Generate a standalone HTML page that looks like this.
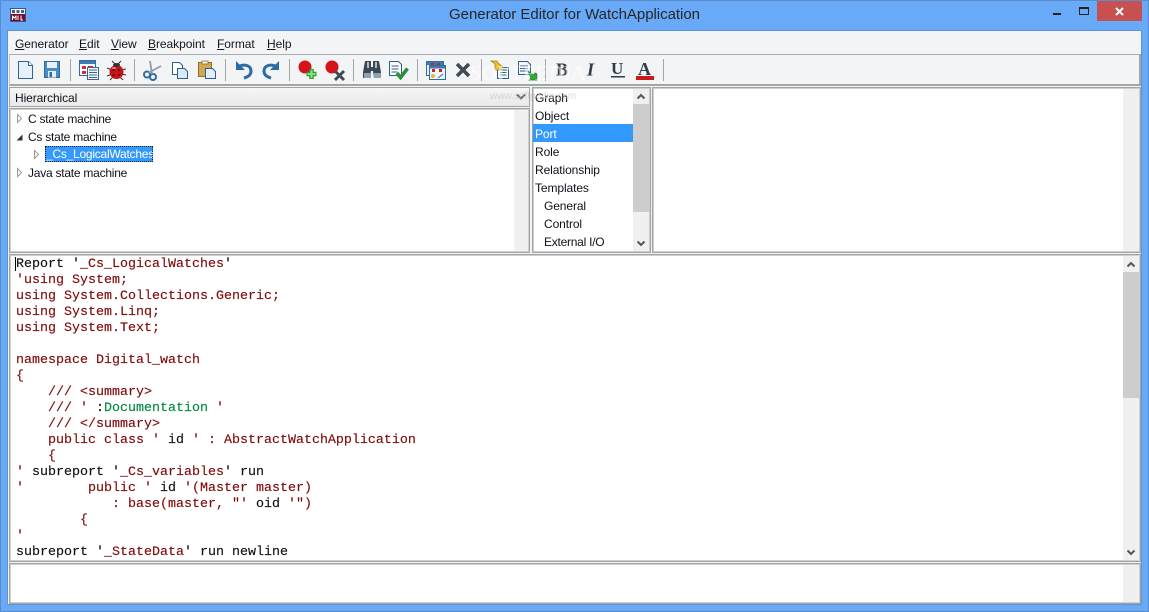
<!DOCTYPE html>
<html><head><meta charset="utf-8"><title>Generator Editor for WatchApplication</title>
<style>
html,body{margin:0;padding:0}
body{width:1149px;height:612px;overflow:hidden;background:#69aaf8;position:relative;font:12px "Liberation Sans",sans-serif;color:#10101a}
div,span,pre,svg{position:absolute;box-sizing:border-box}
u{text-decoration:underline}
.frame{left:0;top:0;width:1149px;height:612px;border:1px solid #5a8ccb}
.client{left:8px;top:31px;width:1133px;height:573px;background:#f3f4f6;outline:1px solid #5f93d2}
.panel{background:#fff;border:1px solid #a3a3a3;box-shadow:inset 0 0 0 1px #cfcfcf}
.sb{background:#f0f0f0}
.th{background:#cdcdcd}
.t{white-space:nowrap;line-height:18px;letter-spacing:-.1px}
.tr{letter-spacing:-.24px}
.m{top:35px;line-height:18px;white-space:nowrap;color:#141420;letter-spacing:-.05px}
pre{margin:0;left:16px;top:257px;font:13.33px/16px "Liberation Mono",monospace;color:#7f0a0a;-webkit-text-stroke:.15px currentColor}
b{font-weight:normal;color:#111}
i{font-style:normal;color:#008a3c}
</style></head><body>
<div class="frame"></div>
<svg style="left:10px;top:8px" width="17" height="14" viewBox="0 0 17 14"><rect x=".5" y=".5" width="15" height="13" fill="#fff" stroke="#34578a"/><rect x="2" y="2" width="3" height="3" fill="#3c5f96"/><rect x="6.500" y="2" width="3" height="3" fill="#3c5f96"/><rect x="11" y="2" width="3" height="3" fill="#3c5f96"/><rect x="1" y="6" width="14" height="7" fill="#7a0a2a"/><path d="M2.500 12V7.500M6 12V7.500M2.500 8l1.700 2L6 8M8 7.500v4.500M11 7.500v4.500h2" stroke="#fff" fill="none"/></svg>
<div class="t" style="left:449px;top:5px;font-size:15px;line-height:20px;color:#262626;letter-spacing:-.03px">Generator Editor for WatchApplication</div>
<div style="left:1053px;top:13px;width:8px;height:2px;background:#222"></div>
<div style="left:1079px;top:7px;width:10px;height:8px;border:1px solid #222;border-top-width:2px"></div>
<div style="left:1097px;top:1px;width:45px;height:20px;background:#c75050"></div>
<svg style="left:1115px;top:7px" width="10" height="9" viewBox="0 0 10 9"><path d="M1 1l7 7M8 1L1 8" stroke="#fff" stroke-width="2"/></svg>
<div class="client"></div>

<div class="m" style="left:15px"><u>G</u>enerator</div>
<div class="m" style="left:79px"><u>E</u>dit</div>
<div class="m" style="left:111px"><u>V</u>iew</div>
<div class="m" style="left:148px"><u>B</u>reakpoint</div>
<div class="m" style="left:217px"><u>F</u>ormat</div>
<div class="m" style="left:267px"><u>H</u>elp</div>

<div style="left:9px;top:54px;width:1132px;height:32px;border:1px solid #a9adb3;border-left-color:#c4c4c4;border-right:2px solid #a5a5a5;border-bottom:2px solid #a5a5a5;background:#f3f4f6"></div>

<svg style="left:0;top:54px" width="1149" height="32" viewBox="0 54 1149 32">
<g stroke="#a2a6aa" stroke-width="1"><path d="M70.500 59v22M134.500 59v22M225.500 59v22M289.500 59v22M353.500 59v22M417.500 59v22M481.500 59v22M545.500 59v22M663.500 59v22"/></g>
<!-- new -->
<path d="M18.500 61.500h10l4 4v13h-14z" fill="#e6f0fa" stroke="#2f6496"/><path d="M28.500 61.500v4h4" fill="#fff" stroke="#2f6496"/>
<!-- save -->
<rect x="44.500" y="61.500" width="15" height="16" fill="#4a8cc4" stroke="#2f6c9c"/><rect x="47" y="62" width="10" height="6" fill="#e9f1f7"/><rect x="48" y="71" width="8" height="6.500" fill="#e6eef5"/><rect x="49.500" y="72" width="2.500" height="5" fill="#2f6c9c"/>
<!-- report list -->
<rect x="79.500" y="60.500" width="16" height="15" fill="#fff" stroke="#2f6ea5"/><rect x="80" y="61" width="15" height="3" fill="#3a7cb5"/><rect x="82" y="66" width="4" height="3" fill="#d03030"/><rect x="88" y="66" width="5" height="3" fill="#d03030"/><rect x="82" y="71" width="4" height="3" fill="#d03030"/>
<rect x="87.500" y="67.500" width="11" height="12" fill="#f3f7fb" stroke="#37638c"/><path d="M89 70h8M89 72.500h8M89 75h8M89 77.500h8" stroke="#37638c"/>
<!-- bug -->
<path d="M107 68l5 2M107 76l5-2M110 80l3-3M126 69l-5 1M126 75l-5-1M123 80l-3-3M112 61l3 3M121 61l-3 3" stroke="#333" stroke-width="1" fill="none"/>
<circle cx="116.500" cy="72" r="7" fill="#c3161c"/><ellipse cx="116.500" cy="65" rx="3.500" ry="2" fill="#333"/><circle cx="113.500" cy="70" r="1" fill="#5c0808"/><circle cx="119" cy="70" r="1" fill="#5c0808"/><circle cx="113.500" cy="75" r="1" fill="#5c0808"/><circle cx="119" cy="75" r="1" fill="#5c0808"/><ellipse cx="114" cy="68" rx="2" ry="1" fill="#ee8080"/>
<!-- scissors -->
<circle cx="147" cy="74.500" r="3" fill="none" stroke="#2f6ea5" stroke-width="2"/><circle cx="153" cy="77" r="3" fill="none" stroke="#2f6ea5" stroke-width="2"/><path d="M149 72.500L161 66M152 74L150 61" stroke="#8e9ca8" stroke-width="1.800"/>
<!-- copy -->
<path d="M172.500 62.500h7l3 3v9h-10z" fill="#fff" stroke="#2f5f8c"/><path d="M177.500 68.500h7l3 3v7h-10z" fill="#dbe9f6" stroke="#2f5f8c"/>
<!-- paste -->
<rect x="198.500" y="62.500" width="13" height="14" fill="#d2a951" stroke="#8c6c26"/><rect x="202" y="61" width="6" height="3" fill="#e8e8e8" stroke="#8c6c26" stroke-width=".7"/><path d="M205.500 68.500h7l3 3v7h-10z" fill="#e4eef8" stroke="#2f5f8c"/>
<!-- undo -->
<path d="M238 67c7-4 13-1 13 4 0 4-3 6-7 7" fill="none" stroke="#2c6ca5" stroke-width="3"/><path d="M236 61v9h9z" fill="#2c6ca5"/>
<!-- redo -->
<path d="M277 67c-7-4-13-1-13 4 0 4 3 6 7 7" fill="none" stroke="#2c6ca5" stroke-width="3"/><path d="M279 61v9h-9z" fill="#2c6ca5"/>
<!-- bp add -->
<circle cx="305" cy="67" r="6.500" fill="#d5141a"/><path d="M311.500 69v10M306.500 74h10" stroke="#2a9c30" stroke-width="4.500"/><path d="M311.500 70v8M307.500 74h8" stroke="#8fdc8c" stroke-width="2"/>
<!-- bp del -->
<circle cx="332" cy="67" r="6.500" fill="#d5141a"/><path d="M335 71l9 9M344 71l-9 9" stroke="#3f4a54" stroke-width="3"/>
<!-- binoculars -->
<path d="M365 61h6v6h2v-6h6l2 11v6h-7l-1-7h-2l-1 7h-7v-6z" fill="#3d4a56"/><rect x="364" y="73" width="7" height="5" fill="#8da2b5"/><rect x="374" y="73" width="7" height="5" fill="#8da2b5"/><rect x="367" y="62" width="2" height="6" fill="#aebbc6"/><rect x="375" y="62" width="2" height="6" fill="#aebbc6"/>
<!-- check -->
<path d="M389.500 61.500h9l3 3v11h-12z" fill="#fff" stroke="#2f5f8c"/><path d="M391.500 66h7M391.500 69h7M391.500 72h6" stroke="#2f5f8c"/><path d="M397 73l3.500 4.500 7-9" fill="none" stroke="#2a9030" stroke-width="3.500"/>
<!-- dialogs -->
<rect x="426.500" y="61.500" width="17" height="14" fill="#e7f0f8" stroke="#2f6ea5"/><rect x="427" y="62" width="16" height="3" fill="#3a7cb5"/><rect x="431" y="63" width="3" height="2" fill="#d02020"/><rect x="437" y="63" width="3" height="2" fill="#d02020"/>
<rect x="429.500" y="65.500" width="16" height="14" fill="#f0f5fa" stroke="#2f6ea5"/><rect x="430" y="66" width="15" height="2.500" fill="#3a7cb5"/><rect x="432" y="69" width="3" height="3" fill="#d02020"/><rect x="439" y="69" width="3" height="3" fill="#d02020"/><circle cx="433" cy="76" r="2" fill="#e8b830"/><path d="M438 78l5-4" stroke="#2f6ea5"/>
<!-- X -->
<path d="M457 64l12 12M469 64l-12 12" stroke="#3f4a54" stroke-width="3.500"/>
<!-- import -->
<rect x="497.500" y="67.500" width="11" height="11" fill="#f3f7fb" stroke="#2f5f8c"/><path d="M500 70h7M500 72.500h7M500 75h7" stroke="#2f5f8c"/><path d="M491 61h6l1 2 5 4-2 2 2 1h-8v-6z" fill="#e8c030" stroke="#9a7a12" stroke-width=".7"/>
<!-- export -->
<path d="M518.500 61.500h9l3 3v10h-12z" fill="#f3f7fb" stroke="#2f5f8c"/><path d="M520 66h8M520 68.500h8M520 71h8" stroke="#2f5f8c"/><path d="M528 71l6 4 1-2 2 1v6h-8l2-2z" fill="#36a83c" stroke="#1d7a24" stroke-width=".7"/>
<!-- format -->
<text x="556" y="75.500" font-family="Liberation Serif,serif" font-weight="bold" font-size="18" fill="#333d47">B</text>
<text x="587" y="75.500" font-family="Liberation Serif,serif" font-weight="bold" font-style="italic" font-size="18" fill="#333d47">I</text>
<text x="611" y="74" font-family="Liberation Serif,serif" font-weight="bold" font-size="17" fill="#333d47">U</text><rect x="611" y="76" width="14" height="1.500" fill="#333d47"/>
<text x="638" y="75" font-family="Liberation Serif,serif" font-weight="bold" font-size="18" fill="#333d47">A</text><rect x="636" y="76" width="18" height="4" fill="#c81a1a"/>
</svg>

<!-- hierarchical header -->
<div style="left:9px;top:87px;width:521px;height:20px;border:1px solid #a3a3a3;background:linear-gradient(#f6f6f6,#e9e9e9)"></div>
<div class="t" style="left:15px;top:89px">Hierarchical</div>
<svg style="left:516px;top:93px" width="10" height="8" viewBox="0 0 10 8"><path d="M1 1.500l4 4 4-4" fill="none" stroke="#666" stroke-width="2"/></svg>

<!-- tree -->
<div class="panel" style="left:9px;top:108px;width:521px;height:145px"></div>
<div class="sb" style="left:514px;top:110px;width:14px;height:141px"></div>
<svg style="left:14px;top:112px" width="30" height="70" viewBox="14 112 30 70"><path d="M17.500 114.500l4 4-4 4zM34.500 150.500l4 4-4 4zM17.500 168.500l4 4-4 4z" fill="#fff" stroke="#9a9a9a"/><path d="M16.500 140.500h6v-6z" fill="#333"/></svg>
<div class="t tr" style="left:28px;top:110px">C state machine</div>
<div class="t tr" style="left:28px;top:128px">Cs state machine</div>
<div class="t tr" style="top:146px;width:108px;height:16px;overflow:hidden;background:#3399ff;color:#fff;line-height:17px;left:45px;padding-left:1px;outline:1px dotted #223;outline-offset:-1px">_Cs_LogicalWatches</div>
<div class="t tr" style="left:28px;top:164px">Java state machine</div>

<!-- list -->
<div class="panel" style="left:532px;top:87px;width:119px;height:166px"></div>
<div class="sb" style="left:633px;top:89px;width:16px;height:162px"></div>
<div class="th" style="left:633px;top:104px;width:16px;height:108px"></div>
<svg style="left:636px;top:93px" width="10" height="7" viewBox="0 0 10 7"><path d="M1.500 5.500l3.500-3.500 3.500 3.500" fill="none" stroke="#555" stroke-width="2"/></svg>
<svg style="left:636px;top:240px" width="10" height="7" viewBox="0 0 10 7"><path d="M1.500 1.500l3.500 3.500 3.500-3.500" fill="none" stroke="#555" stroke-width="2"/></svg>
<div style="left:533px;top:124px;width:100px;height:18px;background:#3399ff"></div>
<div class="t" style="left:535px;top:89px">Graph</div>
<div class="t" style="left:535px;top:107px">Object</div>
<div class="t" style="left:535px;top:125px;color:#fff">Port</div>
<div class="t" style="left:535px;top:143px">Role</div>
<div class="t" style="left:535px;top:161px">Relationship</div>
<div class="t" style="left:535px;top:179px">Templates</div>
<div class="t" style="left:544px;top:197px">General</div>
<div class="t" style="left:544px;top:215px">Control</div>
<div class="t" style="left:544px;top:233px;letter-spacing:-.25px">External I/O</div>

<!-- right -->
<div class="panel" style="left:652px;top:87px;width:489px;height:166px"></div>
<div class="sb" style="left:1123px;top:89px;width:16px;height:162px"></div>

<!-- editor -->
<div class="panel" style="left:9px;top:254px;width:1132px;height:308px"></div>
<div class="sb" style="left:1123px;top:256px;width:16px;height:304px"></div>
<div class="th" style="left:1123px;top:272px;width:16px;height:126px"></div>
<svg style="left:1126px;top:261px" width="10" height="7" viewBox="0 0 10 7"><path d="M1.500 5.500l3.500-3.500 3.500 3.500" fill="none" stroke="#555" stroke-width="2"/></svg>
<svg style="left:1126px;top:549px" width="10" height="7" viewBox="0 0 10 7"><path d="M1.500 1.500l3.500 3.500 3.500-3.500" fill="none" stroke="#555" stroke-width="2"/></svg>
<div style="left:15px;top:257px;width:1px;height:14px;background:#000"></div>
<pre><b>Report '</b>_Cs_LogicalWatches<b>'</b>
'using System;
using System.Collections.Generic;
using System.Linq;
using System.Text;

namespace Digital_watch
{
    /// &lt;summary&gt;
    /// ' <b>:</b><i>Documentation</i> '
    /// &lt;/summary&gt;
    public class ' <b>id</b> ' : AbstractWatchApplication
    {
' <b>subreport '</b>_Cs_variables<b>' run</b>
'        public ' <b>id</b> '(Master master)
            : base(master, "' <b>oid</b> '")
        {
'
<b>subreport '</b>_StateData<b>' run newline</b></pre>

<!-- bottom -->
<div class="panel" style="left:9px;top:563px;width:1132px;height:41px"></div>
<div class="sb" style="left:1123px;top:565px;width:16px;height:37px"></div>

<!-- watermark -->
<div class="t" style="left:470px;top:60px;font:bold 21px/26px 'Liberation Serif',serif;color:#fff;opacity:.5;letter-spacing:-.5px">SOFTPEDIA</div>
<div class="t" style="left:490px;top:89px;font:10px/16px 'Liberation Sans',sans-serif;color:#bbb;opacity:.55;letter-spacing:0">www.softpedia.com</div>
</body></html>
